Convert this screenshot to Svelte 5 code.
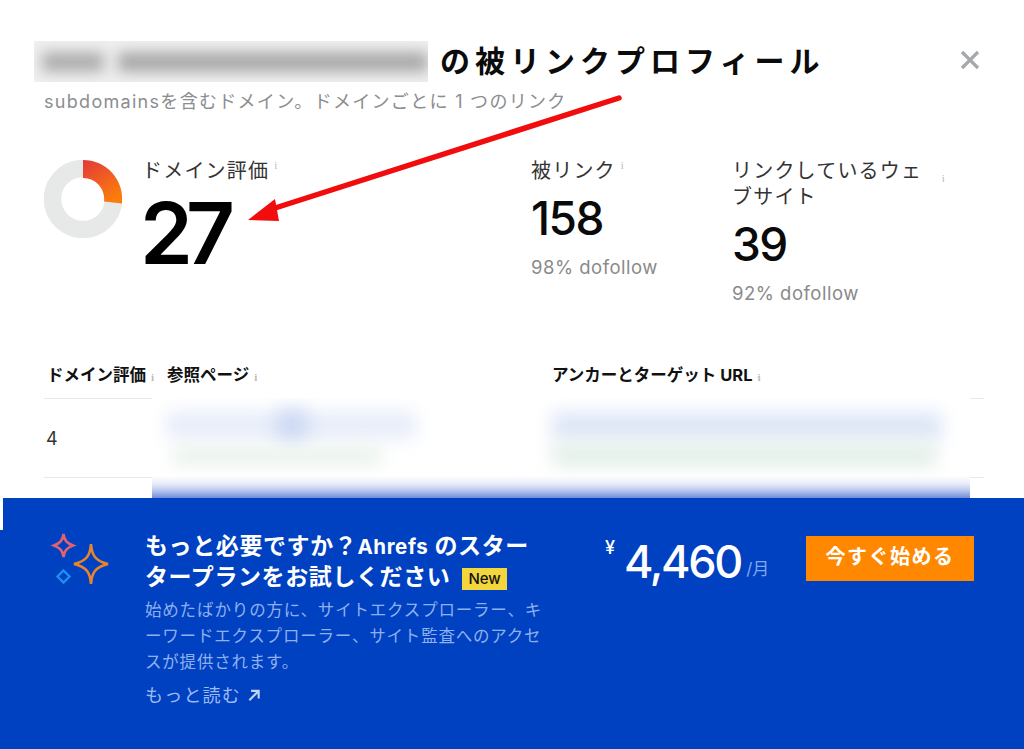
<script>
    const stats = [
        { label: "被リンク", value: "158", sub: "98% dofollow" },
        { label: "リンクしているウェブサイト", value: "39", sub: "92% dofollow" }
    ];
</script>

<div class="page">
    <section class="modal">
        <header class="head">
            <div class="blurred-title"><span class="blob b1"></span><span class="blob b2"></span></div>
            <h1>の被リンクプロフィール</h1>
            <svg class="close" viewBox="0 0 20 20" width="20" height="20">
                <path d="M2 2 L18 18 M18 2 L2 18" stroke="#a6a9ab" stroke-width="3.2" fill="none" />
            </svg>
        </header>
        <p class="note">subdomainsを含むドメイン。ドメインごとに 1 つのリンク</p>

        <div class="stats">
            <div class="main-stat">
                <svg class="donut" viewBox="0 0 78 78" width="78" height="78">
                    <defs>
                        <linearGradient id="dr" x1="0" y1="0" x2="0.6" y2="1">
                            <stop offset="0" stop-color="#e2393b" />
                            <stop offset="1" stop-color="#fb7d0c" />
                        </linearGradient>
                    </defs>
                    <circle cx="39" cy="39" r="30.5" fill="none" stroke="#e7e8e8" stroke-width="17.5" />
                    <path d="M39 0 A39 39 0 0 1 77.9 43.5 L60 41.6 A21 21 0 0 0 39 18 Z" fill="url(#dr)" />
                </svg>
                <div>
                    <div class="label">ドメイン評価<i>i</i></div>
                    <div class="big">27</div>
                </div>
            </div>
            {#each stats as s, n}
                <div class="stat" class:wide={n === 1}>
                    <div class="label"><span>{s.label}</span><i>i</i></div>
                    <div class="num">{s.value}</div>
                    <div class="sub">{s.sub}</div>
                </div>
            {/each}
        </div>

        <div class="table">
            <div class="row th">
                <div class="c1">ドメイン評価<i>i</i></div>
                <div class="c2">参照ページ<i>i</i></div>
                <div class="c3">アンカーとターゲット URL<i>i</i></div>
            </div>
            <div class="row td">
                <div class="c1">4</div>
            </div>
        </div>
    </section>

    <div class="table-blur">
        <span class="smear s1"></span>
        <span class="smear s1b"></span>
        <span class="smear s2"></span>
        <span class="smear s3"></span>
        <span class="smear s4"></span>
        <span class="fade"></span>
    </div>

    <section class="promo">
        <svg class="stars" viewBox="0 0 60 56" width="60" height="56">
            <path d="M13.5 4 C14.3 10 16.5 13 23 15.5 C16.5 18 14.3 21 13.5 27 C12.7 21 10.5 18 4 15.5 C10.5 13 12.7 10 13.5 4 Z" fill="none" stroke="#e0616f" stroke-width="2.6" />
            <path d="M41 14 C41.8 25 45 31 58 34 C45 37 41.8 43 41 54 C40.2 43 37 37 24 34 C37 31 40.2 25 41 14 Z" fill="none" stroke="#e8842a" stroke-width="2.6" />
            <path d="M13.5 40.5 L19.5 46.5 L13.5 52.5 L7.5 46.5 Z" fill="none" stroke="#1c8ff0" stroke-width="2.4" />
        </svg>
        <div class="copy">
            <h2>もっと必要ですか？<span class="latin">Ahrefs</span> のスタータープランをお試しください<b class="new">New</b></h2>
            <p>始めたばかりの方に、サイトエクスプローラー、キーワードエクスプローラー、サイト監査へのアクセスが提供されます。</p>
            <div class="more">もっと読む
                <svg viewBox="0 0 12 12" width="14" height="14">
                    <path d="M2 10.5 L10 2.5 M3.5 2.5 H10 V9" fill="none" stroke="#c3d4f7" stroke-width="1.8" />
                </svg>
            </div>
        </div>
        <div class="price"><sup>¥</sup><strong>4,460</strong><span>/月</span></div>
        <div class="cta">今すぐ始める</div>
    </section>

    <svg class="arrow" viewBox="0 0 1024 749" width="1024" height="749">
        <path d="M619 98 L272 209" stroke="#f10d0d" stroke-width="5.5" stroke-linecap="round" fill="none" />
        <path d="M248 220 L275 199 L279 221 Z" fill="#f10d0d" />
    </svg>
</div>

<style>
    :global(body) {
        margin: 0;
        background: #fff;
    }
    .page {
        position: relative;
        width: 1024px;
        height: 749px;
        overflow: hidden;
        display: flex;
        flex-direction: column;
        font-family: Inter, "Noto Sans CJK JP", sans-serif;
        background: #fff;
    }
    .modal {
        height: 498px;
        box-sizing: border-box;
        padding: 41px 40px 0 44px;
    }
    .head {
        display: flex;
        align-items: center;
        height: 41px;
        margin-left: -10px;
    }
    .blurred-title {
        position: relative;
        width: 394px;
        height: 41px;
        background: #f0f0f0;
        overflow: hidden;
        flex: none;
    }
    .blob {
        position: absolute;
        top: 11px;
        height: 20px;
        background: #a9a9a9;
        filter: blur(7px);
    }
    .b1 { left: 8px; width: 62px; background: #aeaeae; }
    .b2 { left: 84px; width: 310px; }
    h1 {
        margin: -2px 0 0 12px;
        font-size: 30px;
        font-weight: 700;
        letter-spacing: 5px;
        color: #0b0b0b;
        white-space: nowrap;
        flex: 1;
        line-height: 38px;
    }
    .close {
        flex: none;
        margin: -4px 4px 0 0;
    }
    .note {
        margin: 8px 0 0;
        font-size: 18px;
        line-height: 24px;
        color: #8b8d8f;
        letter-spacing: 1.3px;
        white-space: nowrap;
    }
    .stats {
        display: flex;
        margin-top: 45px;
        height: 159px;
    }
    .main-stat {
        display: flex;
        gap: 21px;
        width: 487px;
    }
    .donut {
        margin-top: 1px;
    }
    .label {
        font-size: 20px;
        line-height: 26px;
        color: #333;
        letter-spacing: 1.2px;
        display: flex;
        margin-top: -1px;
        margin-left: -1px;
    }
    .stat .label {
        margin-left: 0;
    }
    i {
        font-family: "Liberation Serif", serif;
        font-style: normal;
        font-size: 11px;
        line-height: 14px;
        color: #bbb;
        margin-left: 5px;
    }
    .big {
        font-size: 85px;
        line-height: 80px;
        font-weight: 600;
        letter-spacing: -7px;
        color: #000;
        margin-top: 10px;
        margin-left: -3px;
    }
    .stat {
        width: 201px;
    }
    .stat.wide {
        width: 214px;
    }
    .stat.wide .label i {
        margin: 13px 0 0 0;
    }
    .num {
        font-size: 46px;
        line-height: 50px;
        font-weight: 500;
        letter-spacing: -1.5px;
        color: #0a0a0a;
        margin-top: 9px;
    }
    .sub {
        font-size: 18.5px;
        line-height: 26px;
        margin-top: 11px;
        color: #8a8a8a;
        letter-spacing: 0.5px;
    }
    .table {
        margin-top: 42px;
        position: relative;
    }
    .row {
        display: flex;
        border-bottom: 1px solid #e8e8e8;
    }
    .th {
        height: 38px;
        font-size: 16.5px;
        font-weight: 700;
        color: #111;
        line-height: 30px;
    }
    .td {
        height: 78px;
        align-items: center;
        font-size: 18px;
        color: #333;
    }
    .c1 {
        width: 123px;
        padding-left: 3px;
        white-space: nowrap;
        box-sizing: border-box;
    }
    .td .c1 {
        padding-left: 2px;
    }
    .c2 {
        width: 385px;
    }
    .table-blur {
        position: absolute;
        left: 152px;
        top: 398px;
        width: 818px;
        height: 100px;
        background: #fff;
        overflow: hidden;
    }
    .smear {
        position: absolute;
        filter: blur(9px);
    }
    .s1 { left: 14px; top: 14px; width: 250px; height: 26px; background: #e6ecf9; }
    .s1b { left: 125px; top: 12px; width: 30px; height: 30px; background: #cdd9f4; }
    .s2 { left: 20px; top: 50px; width: 210px; height: 16px; background: #e6f1ea; }
    .s3 { left: 400px; top: 14px; width: 390px; height: 28px; background: #dde6f7; }
    .s4 { left: 400px; top: 46px; width: 385px; height: 22px; background: #e2efe8; }
    .fade {
        position: absolute;
        left: 0;
        right: 0;
        top: 78px;
        bottom: 0;
        background: linear-gradient(#ffffff00, #e8ecf9 35%, #bcc8ee 65%, #6f8cdc);
    }
    .promo {
        position: relative;
        flex: 1;
        margin-left: 3px;
        background: #0041c1;
        display: flex;
        align-items: flex-start;
        padding: 32px 50px 0 47px;
    }
    .promo::before {
        content: "";
        position: absolute;
        left: -3px;
        top: 32px;
        bottom: 0;
        width: 3px;
        background: #0041c1;
    }
    .stars {
        flex: none;
        margin-right: 35px;
    }
    .copy {
        width: 400px;
        flex: none;
        margin-top: 1px;
    }
    h2 {
        margin: 0;
        font-size: 23px;
        line-height: 31px;
        font-weight: 700;
        color: #fff;
        letter-spacing: 0.6px;
    }
    .latin {
        font-size: 20.5px;
    }
    .new {
        display: inline-block;
        font-family: Inter, sans-serif;
        font-size: 15px;
        line-height: 22px;
        font-weight: 500;
        letter-spacing: 0;
        padding: 0 6px;
        margin-left: 12px;
        background: #f2d63c;
        color: #111;
        vertical-align: 1px;
    }
    p {
        margin: 0;
    }
    .copy p {
        margin-top: 4px;
        font-size: 16.5px;
        line-height: 26px;
        letter-spacing: 0.8px;
        color: #8fb0ee;
    }
    .more {
        margin-top: 8px;
        font-size: 18px;
        line-height: 26px;
        color: #9dbaf2;
        letter-spacing: 1.2px;
    }
    .price {
        flex: none;
        width: 201px;
        margin-left: 60px;
        display: flex;
        align-items: flex-start;
        color: #fff;
        white-space: nowrap;
    }
    .price sup {
        font-size: 18px;
        font-weight: 500;
        line-height: 20px;
        margin-top: 8px;
        margin-right: 9px;
    }
    .price strong {
        font-size: 45px;
        line-height: 60px;
        font-weight: 500;
        letter-spacing: -2.3px;
        margin-top: 2px;
    }
    .price span {
        font-size: 17px;
        color: #7ea8f0;
        margin-top: 26px;
        margin-left: 5px;
        line-height: 26px;
    }
    .cta {
        flex: none;
        width: 168px;
        height: 45px;
        margin-top: 6px;
        background: #ff8800;
        color: #fff;
        font-size: 20px;
        font-weight: 700;
        letter-spacing: 1.5px;
        line-height: 42px;
        text-align: center;
    }
    .arrow {
        position: absolute;
        left: 0;
        top: 0;
        pointer-events: none;
    }
</style>
